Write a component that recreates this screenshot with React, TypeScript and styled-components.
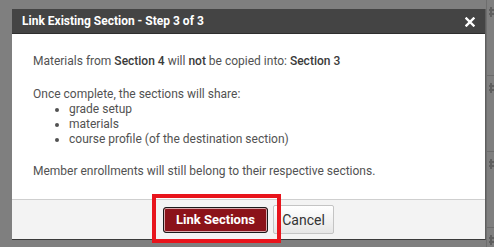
import styled, { createGlobalStyle } from 'styled-components';

const GlobalStyle = createGlobalStyle`
    html, body {
        margin: 0;
        padding: 0;
        background: #7f7f7f;
    }
    * {
        box-sizing: border-box;
    }
`;

const rows = [0, 1, 2, 3];

const App = () => {
    return (
        <>
            <GlobalStyle />
            <Screen>
                <Dialog>
                    <TitleBar>
                        <Title>Link Existing Section - Step 3 of 3</Title>
                        <CloseButton aria-label="close">
                            <svg width="10" height="10" viewBox="0 0 10 10">
                                <path d="M1.5 1.5 L8.5 8.5 M8.5 1.5 L1.5 8.5" stroke="#fff" strokeWidth="2.4" strokeLinecap="square" />
                            </svg>
                        </CloseButton>
                    </TitleBar>
                    <Body>
                        <Paragraph>
                            Materials from <Strong>Section 4</Strong> will <Strong>not</Strong> be copied into: <Strong>Section 3</Strong>
                        </Paragraph>
                        <Paragraph>Once complete, the sections will share:</Paragraph>
                        <List>
                            <li>grade setup</li>
                            <li>materials</li>
                            <li>course profile (of the destination section)</li>
                        </List>
                        <Paragraph>Member enrollments will still belong to their respective sections.</Paragraph>
                    </Body>
                    <Footer>
                        <Highlight>
                            <PrimaryButton>Link Sections</PrimaryButton>
                        </Highlight>
                        <SecondaryButton>Cancel</SecondaryButton>
                    </Footer>
                </Dialog>
                <PageStrip>
                    {rows.map((r) => (
                        <StripRow key={r}>
                            {/* partly hidden settings icon of the page behind */}
                            <svg width="12" height="12" viewBox="0 0 12 12">
                                <path d="M3 1 V11 M7 1 V11 M1 4 H10 M1 8 H10" stroke="#5f5f5f" strokeWidth="2" />
                            </svg>
                        </StripRow>
                    ))}
                </PageStrip>
            </Screen>
        </>
    );
};

export default App;

const Screen = styled.div`
    width: 494px;
    height: 247px;
    display: flex;
    align-items: flex-start;
    padding: 9px 0 0 12px;
    background: #7f7f7f;
    overflow: hidden;
    font-family: Roboto, 'Liberation Sans', sans-serif;
`;

const Dialog = styled.div`
    width: 474px;
    height: 231px;
    display: flex;
    flex-direction: column;
    background: #fff;
    border-right: 1px solid #5e5e5e;
    border-bottom: 1px solid #3a3a3a;
    flex-shrink: 0;
`;

const TitleBar = styled.div`
    height: 25px;
    display: flex;
    align-items: center;
    justify-content: space-between;
    padding: 0 10px 0 10px;
    background: #444444;
    border-bottom: 1px solid #2e2e2e;
`;

const Title = styled.div`
    color: #fff;
    font-size: 12px;
    font-weight: 700;
`;

const CloseButton = styled.button`
    border: none;
    background: none;
    padding: 0;
    width: 10px;
    height: 10px;
    display: flex;
    align-items: center;
    justify-content: center;
    margin-top: 1px;
`;

const Body = styled.div`
    flex: 1;
    padding: 20px 21px 0 21px;
    color: #525252;
    font-size: 12px;
    line-height: 15px;
`;

const Paragraph = styled.p`
    margin: 0 0 18px 0;
`;

const Strong = styled.span`
    font-weight: 500;
    color: #3a3a3a;
`;

const List = styled.ul`
    margin: -18px 0 17px 0;
    padding-left: 36px;
    list-style: disc;
`;

const Footer = styled.div`
    height: 40px;
    display: flex;
    align-items: center;
    justify-content: center;
    gap: 5px;
    background: #f3f3f3;
    border-top: 1px solid #cfcfcf;
`;

const Highlight = styled.div`
    position: relative;
    display: flex;
    &::after {
        content: '';
        position: absolute;
        left: -11px;
        right: -13px;
        top: -13px;
        bottom: -10px;
        border: 4px solid #e8141c;
        pointer-events: none;
    }
`;

const PrimaryButton = styled.button`
    height: 26px;
    width: 105px;
    padding: 0;
    border: 1px solid #1a1a1a;
    border-radius: 3px;
    background: #8b1219;
    box-shadow: inset 0 0 0 1px #d9a9ac;
    color: #fff;
    font-family: Roboto, 'Liberation Sans', sans-serif;
    font-size: 13px;
    font-weight: 700;
`;

const SecondaryButton = styled.button`
    height: 29px;
    width: 61px;
    padding: 0;
    border: 1px solid #c4c4c4;
    border-radius: 2px;
    background: linear-gradient(#ffffff, #e6e6e6);
    color: #333;
    font-family: Roboto, 'Liberation Sans', sans-serif;
    font-size: 14px;
`;

const PageStrip = styled.div`
    flex: 1;
    display: flex;
    flex-direction: column;
    margin-top: -9px;
    border-left: 1px solid #6e6e6e;
`;

const StripRow = styled.div`
    height: 76px;
    padding: 6px 0 0 1px;
    border-bottom: 1px solid #6c6c6c;
    box-shadow: 0 34px 0 -33px #6c6c6c;
    svg {
        display: block;
    }
`;
